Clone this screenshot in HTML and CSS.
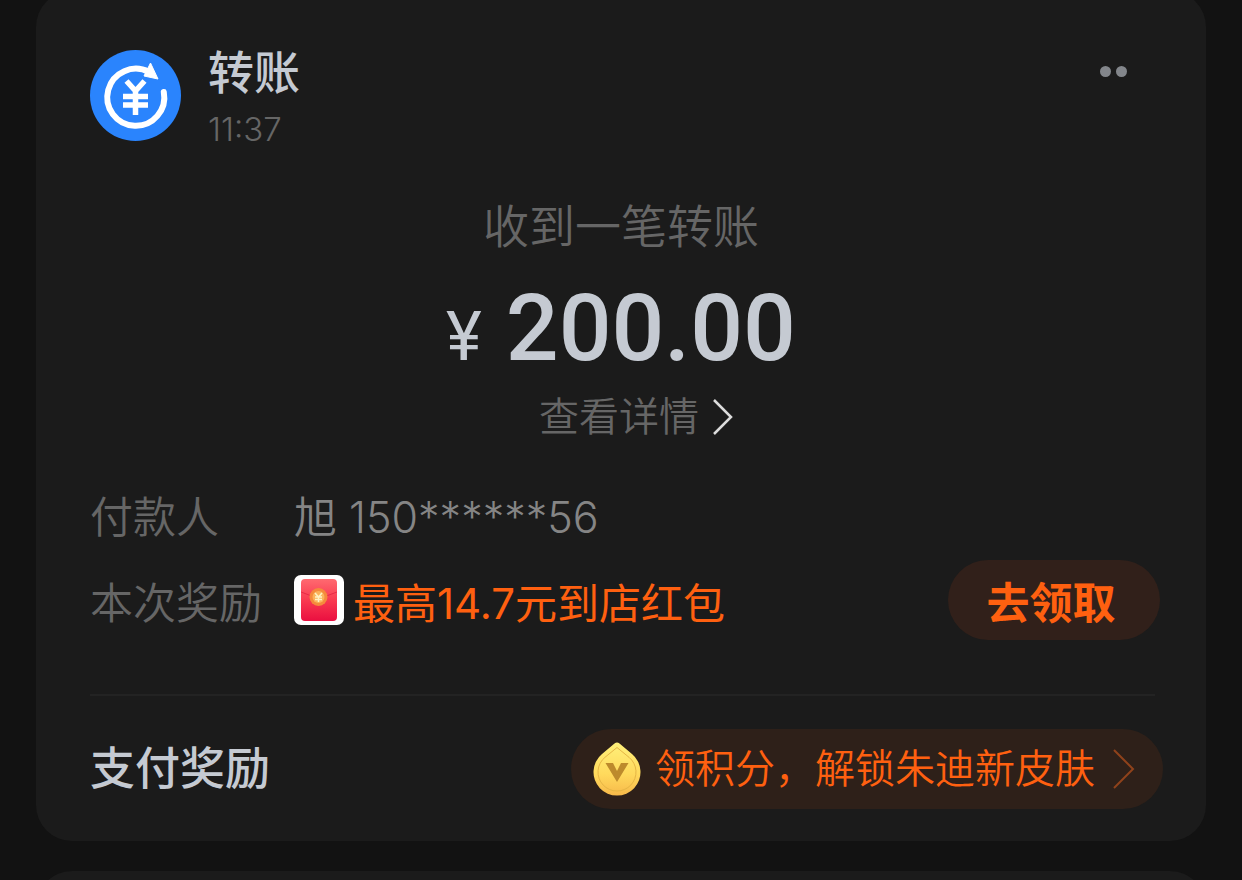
FILE: index.html
```html
<!DOCTYPE html>
<html lang="zh-CN">
<head>
<meta charset="utf-8">
<meta name="viewport" content="width=device-width, initial-scale=1">
<title>转账</title>
<link rel="stylesheet" href="styles.css">
</head>
<body>
<main class="feed">
  <article class="card">
    <header class="card-head">
      <svg class="logo" viewBox="0 0 91 91" aria-hidden="true">
        <circle cx="45.5" cy="45.5" r="45.5" fill="#2a84fd"/>
        <path d="M73.800 42A28.500 28.500 0 1 1 59 22" fill="none" stroke="#fff" stroke-width="6" stroke-linecap="round"/>
        <path d="M60.500 13l7.500 16-14-3z" fill="#fff" stroke="#fff" stroke-linejoin="round"/>
        <path d="M36.500 31l9 10 9-10M45.500 40v25M33 46.500h25M33 55h25" fill="none" stroke="#fff" stroke-width="5.500"/>
      </svg>
      <div class="head-text">
        <h1 class="title">转账</h1>
        <time class="time">11:37</time>
      </div>
      <button class="more" type="button" aria-label="更多"><span class="dot"></span><span class="dot"></span></button>
    </header>
    <section class="summary">
      <p class="caption">收到一笔转账</p>
      <p class="amount"><span class="currency">¥</span><span class="value">200.00</span></p>
      <a class="detail" href="#">查看详情<svg class="detail-arrow" viewBox="0 0 20 36" aria-hidden="true"><path d="M1 1l17 17L1 35" fill="none" stroke="#dcdcdc" stroke-width="2.500"/></svg></a>
    </section>
    <dl class="facts">
      <div class="fact"><dt class="label">付款人</dt><dd class="payer">旭 150******56</dd></div>
      <div class="fact"><dt class="label">本次奖励</dt><dd class="reward">
        <svg class="packet" viewBox="0 0 50 50" aria-hidden="true">
          <defs><linearGradient id="packet-red" x1="0" y1="0" x2="0" y2="1"><stop offset="0" stop-color="#ff6a70"/><stop offset=".5" stop-color="#f93a50"/><stop offset="1" stop-color="#ea0f40"/></linearGradient></defs>
          <rect width="50" height="50" rx="7" fill="#fff"/>
          <rect x="7" y="4" width="36" height="42" rx="4" fill="url(#packet-red)"/>
          <path d="M7 17q18 9 36 0" fill="none" stroke="#e82a45"/>
          <circle cx="24.500" cy="22" r="9" fill="#f58a3c"/>
          <circle cx="24.500" cy="22" r="6" fill="#fbb45c"/>
          <path d="M21 18l3.500 4 3.500-4M24.500 22v5M21 22h7M21 24.500h7" fill="none" stroke="#fff3c4" stroke-width="1.500"/>
        </svg>
        <span class="reward-text">最高14.7元到店红包</span>
        <button class="claim" type="button">去领取</button></dd></div>
    </dl>
    <hr class="rule">
    <footer class="card-foot">
      <h2 class="foot-title">支付奖励</h2>
      <a class="promo" href="#">
        <svg class="coin" viewBox="0 0 48 54" aria-hidden="true">
          <defs><linearGradient id="coin-gold" x1="0" y1="0" x2="0" y2="1"><stop offset="0" stop-color="#fff07a"/><stop offset=".6" stop-color="#ffd95c"/><stop offset="1" stop-color="#f7b94a"/></linearGradient></defs>
          <path d="M21.500 1.600q2.500-2 5 0L39 12A23.500 23.500 0 1 1 9 12z" fill="url(#coin-gold)"/>
          <path d="M24 5.500L36 15.300A19 19 0 1 1 12 15.300z" fill="none" stroke="#e6b544"/>
          <path d="M12.500 21H20l4 8 4-8h7.500L24 40z" fill="#bd8a2c"/>
        </svg>
        <span class="promo-text">领积分，解锁朱迪新皮肤</span>
        <svg class="promo-arrow" viewBox="0 0 22 40" aria-hidden="true"><path d="M1 1l19 19L1 39" fill="none" stroke="#8f421b" stroke-width="2"/></svg>
      </a>
    </footer>
  </article>
  <article class="card card-next"></article>
</main>
</body>
</html>
```
FILE: styles.css
```css
* { box-sizing: border-box; margin: 0; padding: 0; }
html { background: #121212; }
body { font-family: Inter, "Noto Sans CJK SC", sans-serif; color: #c5cad2; overflow: hidden; }
button { border: 0; background: none; font: inherit; cursor: pointer; }
a { text-decoration: none; color: inherit; }
.feed { height: 100vh; overflow: hidden; padding: 0 36px; display: flex; flex-direction: column; gap: 30px; }
.card { flex: none; margin-top: -9px; background: #1b1b1b; border-radius: 36px; padding: 53px 43px 32px 54px; }
.card-head { display: flex; gap: 27px; }
.logo { width: 91px; height: 91px; margin-top: 6px; }
.head-text { flex: 1; }
.title { font-size: 46px; line-height: 56px; font-weight: 500; }
.time { display: block; margin-top: 5px; font-size: 33px; line-height: 48px; font-weight: 300; color: #666; }
.more { display: flex; gap: 5px; align-self: flex-start; padding: 22px 36px 0 0; }
.dot { width: 11px; height: 11px; border-radius: 50%; background: #83868b; }
.summary { display: flex; flex-direction: column; align-items: center; padding: 43px 11px 0 0; }
.caption { font-size: 46px; line-height: 60px; font-weight: 350; color: #666; }
.amount { display: flex; align-items: baseline; gap: 24px; padding: 26px 0 13px; }
.currency { font: 400 68px/1 Roboto, sans-serif; }
.value { font: 500 93px/1 Roboto, sans-serif; }
.detail { display: flex; align-items: center; gap: 14px; padding-left: 30px; font-size: 40px; line-height: 58px; font-weight: 350; color: #666; }
.detail-arrow { width: 20px; height: 36px; }
.facts { padding-top: 25px; }
.fact { display: flex; align-items: center; height: 86px; font-size: 43px; font-weight: 350; }
.label { width: 204px; color: #666; }
.payer { color: #858585; }
.reward { flex: 1; display: flex; align-items: center; gap: 9px; color: #ff6010; font-weight: 400; }
.packet { width: 50px; height: 50px; }
.reward-text { flex: 1; font-size: 42px; }
.claim { width: 212px; height: 80px; margin-right: 3px; padding-right: 6px; border-radius: 40px; background: #31201a; color: #ff6010; font-size: 43px; font-weight: 700; }
.rule { margin: 51px 8px 0 0; border: 0; height: 2px; background: #232323; }
.card-foot { display: flex; justify-content: space-between; align-items: center; padding-top: 33px; }
.foot-title { font-size: 45px; line-height: 60px; font-weight: 500; }
.promo { display: flex; align-items: center; height: 80px; padding: 0 28px 0 22px; gap: 14px; border-radius: 40px; background: #2e2019; color: #ff6010; font-size: 40px; font-weight: 350; }
.promo-text { padding-right: 4px; line-height: 60px; }
.coin { width: 48px; height: 54px; }
.promo-arrow { width: 22px; height: 40px; }
.card-next { height: 100px; margin-top: 0; }
```
